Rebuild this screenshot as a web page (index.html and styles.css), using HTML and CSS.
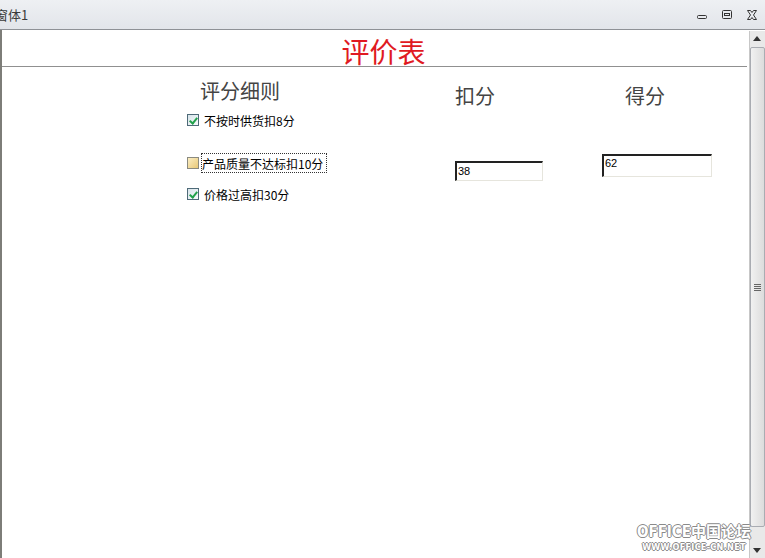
FILE: index.html
```html
<!DOCTYPE html>
<html lang="zh-CN">
<head>
    <meta charset="UTF-8">
    <title>窗体1</title>
    <link rel="stylesheet" href="styles.css">
</head>
<body>
    <div class="window">
        <div class="titlebar">
            <span class="caption">窗体1</span>
            <div class="controls">
                <svg width="12" height="12" viewBox="0 0 12 12"><rect x="1.5" y="6.5" width="9" height="3" rx="1" fill="none" stroke="#333"/></svg>
                <svg width="12" height="12" viewBox="0 0 12 12"><rect x="1.5" y="1.5" width="9" height="8" rx="1" fill="none" stroke="#333"/><rect x="3.5" y="4.5" width="5" height="2" fill="none" stroke="#333"/></svg>
                <svg width="12" height="12" viewBox="0 0 12 12"><path d="M1.5 1.5h3l1.5 2 1.5-2h3l-3 4.5 3 4.5h-3L6 8.5l-1.5 2h-3l3-4.5z" fill="none" stroke="#333"/></svg>
            </div>
        </div>
        <div class="frame">
            <div class="form">
                <div class="title">评价表</div>
                <div class="sheet">
                    <div class="col rules">
                        <div class="head">评分细则</div>
                        <label class="check first"><span class="box on"></span>不按时供货扣8分</label>
                        <label class="check second"><span class="box off"></span><span class="focus">产品质量不达标扣10分</span></label>
                        <label class="check third"><span class="box on"></span>价格过高扣30分</label>
                    </div>
                    <div class="col deduct">
                        <div class="head">扣分</div>
                        <div class="field f38">38</div>
                    </div>
                    <div class="col score">
                        <div class="head">得分</div>
                        <div class="field f62">62</div>
                    </div>
                </div>
            </div>
            <div class="scrollbar">
                <div class="arrow up"></div>
                <div class="thumb"><span class="grip"></span></div>
                <div class="track"></div>
                <div class="arrow down"></div>
            </div>
            <div class="watermark">
                <div class="wm-big">OFFICE中国论坛</div>
                <div class="wm-small">WWW.OFFICE-CN.NET</div>
            </div>
        </div>
    </div>
</body>
</html>
```

FILE: styles.css
```css
html, body {
    margin: 0;
    padding: 0;
    background: #fff;
    font-family: "Noto Sans CJK SC", "Liberation Sans", sans-serif;
}
.window {
    width: 765px;
    height: 558px;
    display: flex;
    flex-direction: column;
    overflow: hidden;
}
.titlebar {
    height: 30px;
    display: flex;
    align-items: center;
    justify-content: space-between;
    background: linear-gradient(#eef0f3, #e2e5ea);
    border-bottom: 1px solid #8e9196;
    box-sizing: border-box;
}
.caption {
    margin-left: -5px;
    font-size: 13px;
    color: #3a3a3a;
}
.controls {
    display: flex;
    gap: 13px;
    margin-right: 7px;
}
.frame {
    flex: 1;
    display: flex;
    position: relative;
}
.form {
    flex: 1;
    border-left: 2px solid #7d7d78;
}
.title {
    height: 36px;
    border-bottom: 1px solid #909090;
    margin-right: 2px;
    text-align: center;
    padding-left: 18px;
    font-size: 28px;
    line-height: 42px;
    color: #e01a22;
}
.sheet {
    display: flex;
    padding-left: 185px;
}
.col .head {
    font-size: 20px;
    color: #444;
    line-height: 24px;
}
.rules { width: 268px; }
.rules .head { margin: 12px 0 0 13px; }
.deduct { width: 147px; }
.deduct .head { margin-top: 17px; }
.score .head { margin: 17px 0 0 23px; }
.check {
    display: flex;
    align-items: center;
    font-size: 12px;
    color: #000;
    height: 14px;
}
.check.first { margin-top: 10px; }
.check.second { margin-top: 29px; }
.check.third { margin-top: 17px; }
.box {
    width: 10px;
    height: 10px;
    border: 1px solid #4e6a78;
    margin-right: 5px;
    position: relative;
}
.box.on {
    background: linear-gradient(135deg, #d8e4ea, #f7fafb);
}
.box.on::after {
    content: "";
    position: absolute;
    left: 3px;
    top: 1px;
    width: 3px;
    height: 6px;
    border: solid #21a14a;
    border-width: 0 2px 2px 0;
    transform: rotate(40deg);
}
.box.off {
    background: linear-gradient(135deg, #fbeec4, #e8c877);
    border-color: #8a8a80;
}
.focus {
    border: 1px dotted #333;
    padding: 1px 3px 0 0;
    margin-left: -3px;
}
.field {
    box-sizing: border-box;
    border: 1px solid #e6e5dd;
    border-top: 2px solid #222;
    border-left: 2px solid #222;
    font-size: 11px;
    font-family: "Liberation Sans", sans-serif;
    line-height: 15px;
    padding-left: 1px;
    background: #fff;
}
.f38 {
    width: 88px;
    height: 20px;
    margin-top: 53px;
    padding-top: 1px;
}
.f62 {
    width: 110px;
    height: 23px;
    margin-top: 46px;
}
.scrollbar {
    width: 15px;
    display: flex;
    flex-direction: column;
    background: #e9e9e9;
    border-left: 1px solid #c7c7c7;
    margin-top: 1px;
}
.arrow {
    height: 16px;
    position: relative;
}
.arrow.up::after {
    content: "";
    position: absolute;
    left: 3px;
    top: 5px;
    border: 4px solid transparent;
    border-bottom: 5px solid #333;
    border-top: 0;
}
.arrow.down::after {
    content: "";
    position: absolute;
    left: 3px;
    top: 6px;
    border: 4px solid transparent;
    border-top: 5px solid #333;
    border-bottom: 0;
}
.thumb {
    height: 478px;
    border: 1px solid #a9acb2;
    border-radius: 2px;
    background: linear-gradient(90deg, #f1f1f1, #dcdcdc);
    display: flex;
    align-items: center;
    justify-content: center;
}
.grip {
    width: 7px;
    height: 7px;
    background: repeating-linear-gradient(#666 0 1px, transparent 1px 2px);
}
.track { flex: 1; }
.watermark {
    position: absolute;
    right: 14px;
    bottom: 6px;
    text-align: center;
    font-weight: bold;
    color: #fff;
    text-shadow: -1px 0 #8a8a8a, 1px 0 #8a8a8a, 0 -1px #8a8a8a, 0 1px #8a8a8a;
    font-family: "DejaVu Sans Condensed", "DejaVu Sans", "Noto Sans CJK SC", sans-serif;
}
.wm-big {
    font-size: 15px;
    line-height: 19px;
}
.wm-small {
    font-size: 9px;
    line-height: 10px;
    letter-spacing: 0.3px;
}
```
